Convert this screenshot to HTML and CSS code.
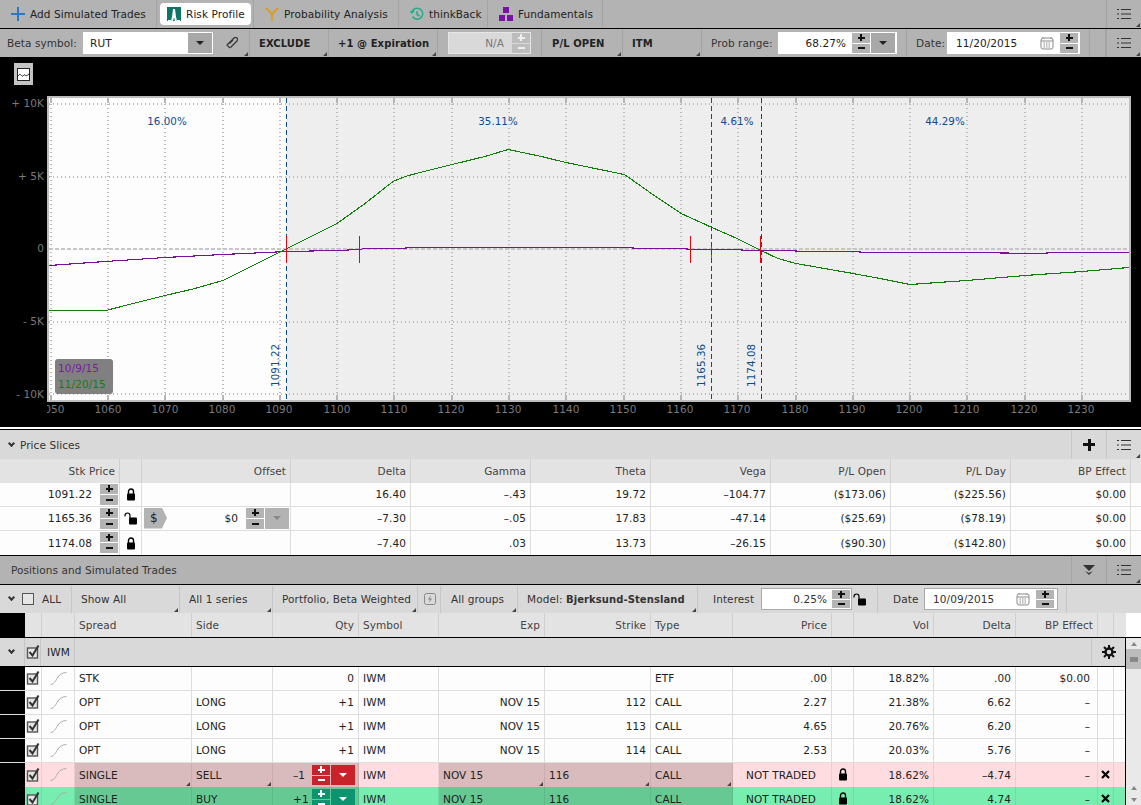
FILE: index.html
```html
<!DOCTYPE html>
<html lang="en">
<head>
  <meta charset="UTF-8">
  <title>Risk Profile</title>
  <link rel="stylesheet" href="styles.css">
</head>
<body>
  <svg class="defs" width="0" height="0">
    <symbol id="menu" viewBox="0 0 14 12"><path d="M0 1.5h2M4 1.5h10M0 6h2M4 6h10M0 10.5h2M4 10.5h10" stroke="#333" stroke-width="1" fill="none"/></symbol>
    <symbol id="lock" viewBox="0 0 10 13"><path d="M2.5 6V3.5a2.5 2.5 0 0 1 5 0V6" stroke="#000" stroke-width="1.4" fill="none"/><rect x="1" y="5.5" width="8" height="7" rx="1" fill="#000"/></symbol>
    <symbol id="unlock" viewBox="0 0 14 13"><path d="M1 4.5V3.5a2.5 2.5 0 0 1 5 0V6" stroke="#000" stroke-width="1.2" fill="none"/><rect x="5" y="5.5" width="8" height="7" rx="1" fill="#000"/></symbol>
    <symbol id="check" viewBox="0 0 14 14"><rect x="1.5" y="3" width="10" height="10" fill="#e6e6e6" stroke="#555" stroke-width="1.4"/><path d="M3.5 7l3 3.5 6-10" stroke="#333" stroke-width="2" fill="none"/></symbol>
    <symbol id="curve" viewBox="0 0 17 13"><path d="M0.5 12.500C5 12 6 8 8 5S12 1 16.500 0.500" stroke="#aaa" stroke-width="1" fill="none"/></symbol>
    <symbol id="cross" viewBox="0 0 9 9"><path d="M1 1l7 7M8 1l-7 7" stroke="#000" stroke-width="2.200" fill="none"/></symbol>
    <symbol id="calendar" viewBox="0 0 14 14"><rect x="1" y="2" width="12" height="11" rx="2" fill="none" stroke="#8a8a8a"/><path d="M1 5h12" stroke="#8a8a8a"/><path d="M3 1v2M11 1v2M3.500 7h7M3.500 9h7M3.500 11h7" stroke="#8a8a8a" stroke-dasharray="1.500 1"/></symbol>
  </svg>

  <div class="tabs">
    <div class="tab tab--first">
      <svg class="tab-ic" viewBox="0 0 14 14"><path d="M7 0v14M0 7h14" stroke="#2b78c5" stroke-width="2"/></svg>
      Add Simulated Trades
    </div>
    <div class="tab tab--risk">
      <span class="tab-active">
        <svg class="tab-ic" viewBox="0 0 14 14"><rect width="14" height="14" fill="#0d7565"/><path d="M5 14l1-4 1-8 1 8 1 4M1 14h3M10 14h3" stroke="#fff" stroke-width="2" fill="none"/></svg>
        Risk Profile
      </span>
    </div>
    <div class="tab tab--prob">
      <svg class="tab-ic" viewBox="0 0 14 14"><path d="M1 1l6 6 6-6M7 7v7" stroke="#dd9d2c" stroke-width="2.200" fill="none"/></svg>
      Probability Analysis
    </div>
    <div class="tab tab--back">
      <svg class="tab-ic" viewBox="0 0 14 14"><path d="M2.500 9.500A5.500 5.500 0 1 0 2 5M0 4l2 2 2-2M7 4v3.500l2.500 1.500" stroke="#1fae8e" stroke-width="1.500" fill="none"/></svg>
      thinkBack
    </div>
    <div class="tab tab--fund">
      <svg class="tab-ic" viewBox="0 0 14 14"><path d="M4 0h6v6H4zM0 8h6v6H0zM8 8h6v6H8z" fill="#7a12a6"/></svg>
      Fundamentals
    </div>
    <div class="bar-fill"></div>
    <div class="menu-btn corner"><svg class="ic-menu"><use href="#menu"/></svg></div>
  </div>

  <div class="toolbar">
    <div class="tool tool--beta">
      <span class="lbl lbl--beta">Beta symbol:</span>
      <div class="field field--beta"><span class="field-text">RUT</span><span class="drop"><i class="tri"></i></span></div>
    </div>
    <div class="tool tool--link corner">
      <svg class="ic-clip" viewBox="0 0 12 12"><path d="M4 11L1 8 8 1a2 2 0 0 1 3 3L4.500 10.500M3.500 6.500L7 3" stroke="#333" stroke-width="1.200" fill="none"/></svg>
    </div>
    <div class="tool tool--excl corner b">EXCLUDE</div>
    <div class="tool tool--exp corner b">+1 @ Expiration</div>
    <div class="tool tool--na">
      <div class="field field--na"><span class="na-text">N/A</span><div class="spin spin--off"><i class="spin-plus"></i><i class="spin-minus"></i></div></div>
    </div>
    <div class="tool tool--pl corner b">P/L OPEN</div>
    <div class="tool tool--itm corner b">ITM</div>
    <div class="tool tool--prob">
      <span class="lbl lbl--prob">Prob range:</span>
      <div class="field field--prob"><span class="prob-text">68.27%</span><div class="spin"><i class="spin-plus"></i><i class="spin-minus"></i></div><span class="drop drop--prob"><i class="tri"></i></span></div>
    </div>
    <div class="tool tool--date">
      <span class="lbl lbl--date">Date:</span>
      <div class="field field--date"><span class="date-text">11/20/2015</span><svg class="ic-cal"><use href="#calendar"/></svg><div class="spin"><i class="spin-plus"></i><i class="spin-minus"></i></div></div>
    </div>
    <div class="bar-fill bar-fill--line"></div>
    <div class="menu-btn corner"><svg class="ic-menu"><use href="#menu"/></svg></div>
  </div>

  <div class="chart">
    <div class="chart-btn"><svg viewBox="0 0 13 13"><rect x="0.500" y="0.500" width="12" height="12" fill="#fff" stroke="#222"/><path d="M1 8c2-3 3-1 4 0s2-2 3-1 2 1 4-1" stroke="#222" fill="none"/></svg></div>
    <svg class="plot" viewBox="0 90 1141 337" width="1141" height="337">
      <rect class="plot-frame" x="47" y="96" width="1084" height="306"/>
      <rect class="plot-bg" x="49" y="98" width="1080" height="302"/>
      <rect class="plot-white" x="49" y="98" width="237" height="302"/>
      <path class="grid-v" d="M51 104V400M108 104V400M165 104V400M223 104V400M280 104V400M337 104V400M394 104V400M452 104V400M509 104V400M566 104V400M624 104V400M681 104V400M738 104V400M796 104V400M853 104V400M910 104V400M967 104V400M1025 104V400M1082 104V400"/>
      <path class="grid-h" d="M49 104H1129M49 177H1129M49 322H1129M49 394H1129"/>
      <path class="grid-zero" d="M49 249H1129"/>
      <path class="ticks" d="M51 98v5M108 98v5M165 98v5M223 98v5M280 98v5M337 98v5M394 98v5M452 98v5M509 98v5M566 98v5M624 98v5M681 98v5M738 98v5M796 98v5M853 98v5M910 98v5M967 98v5M1025 98v5M1082 98v5M51 395v5M108 395v5M165 395v5M223 395v5M280 395v5M337 395v5M394 395v5M452 395v5M509 395v5M566 395v5M624 395v5M681 395v5M738 395v5M796 395v5M853 395v5M910 395v5M967 395v5M1025 395v5M1082 395v5"/>

      <path class="cursor-mid" d="M711.500 242V258"/>
      <path class="line-purple" d="M49 265.500L105 261.500 165 257.500 223 254.500 287 251.500 337 250.500 359 249.500 365 248.500 405 248.500H406V247.500H633V248.500H687V249.500H742V250.500H796V251.500H860V252.500H960L1047 253.500V252.500H1129"/>
      <path class="line-green" d="M49 310.500H106L125 305.500 145 300.500 165 295.500 195 288.500 223 280.500 255 264.500 287 248.500 337 223.500 365 203.500 393 181.500 405 176.500 420 172.500 452 164.500 485 156.500 508 149.500 537 155.500 566 162.500 600 169.500 624 174.500 633 180.500 657 197.500 681 213.500 712 227.500 737 238.500 761 250.500 778 258.500 796 263.500 853 273.500 880 278.500 910 284.500 938 282.500 967 280.500 1025 275.500 1082 271.500 1129 267.500"/>
      <path class="cursor-blue" d="M286.500 98V400M711.500 98V400M761.500 98V400"/>
      <path class="leg-red" d="M286.500 236V263M359.500 236V263M690.500 236V263M760.500 236V263"/>

      <text class="pct" x="167" y="125">16.00%</text>
      <text class="pct" x="498" y="125">35.11%</text>
      <text class="pct" x="737" y="125">4.61%</text>
      <text class="pct" x="945" y="125">44.29%</text>

      <text class="pct-v" transform="translate(279 387) rotate(-90)">1091.22</text>
      <text class="pct-v" transform="translate(705 387) rotate(-90)">1165.36</text>
      <text class="pct-v" transform="translate(755 387) rotate(-90)">1174.08</text>

      <rect class="legend" x="55" y="359" width="58" height="35" rx="3"/>
      <text class="legend-p" x="58" y="372">10/9/15</text>
      <text class="legend-g" x="58" y="388">11/20/15</text>

      <text class="axis-y" x="44" y="107">+ 10K</text>
      <text class="axis-y" x="44" y="180">+ 5K</text>
      <text class="axis-y" x="44" y="252">0</text>
      <text class="axis-y" x="44" y="325">- 5K</text>
      <text class="axis-y" x="44" y="398">- 10K</text>

      <svg x="47" y="402" width="1084" height="16">
        <text class="axis-x" x="4" y="11">1050</text>
        <text class="axis-x" x="61" y="11">1060</text>
        <text class="axis-x" x="118" y="11">1070</text>
        <text class="axis-x" x="175" y="11">1080</text>
        <text class="axis-x" x="232" y="11">1090</text>
        <text class="axis-x" x="290" y="11">1100</text>
        <text class="axis-x" x="347" y="11">1110</text>
        <text class="axis-x" x="404" y="11">1120</text>
        <text class="axis-x" x="461" y="11">1130</text>
        <text class="axis-x" x="519" y="11">1140</text>
        <text class="axis-x" x="576" y="11">1150</text>
        <text class="axis-x" x="633" y="11">1160</text>
        <text class="axis-x" x="690" y="11">1170</text>
        <text class="axis-x" x="748" y="11">1180</text>
        <text class="axis-x" x="805" y="11">1190</text>
        <text class="axis-x" x="862" y="11">1200</text>
        <text class="axis-x" x="919" y="11">1210</text>
        <text class="axis-x" x="977" y="11">1220</text>
        <text class="axis-x" x="1034" y="11">1230</text>
      </svg>
    </svg>
  </div>

  <div class="slices-head">
    <i class="chev"></i><span class="slices-title">Price Slices</span>
    <div class="bar-fill"></div>
    <div class="head-btn head-btn--plus"><i class="big-plus"></i></div>
    <div class="menu-btn menu-btn--light corner"><svg class="ic-menu"><use href="#menu"/></svg></div>
  </div>

  <div class="slices">
    <div class="s-row s-row--head">
      <div class="c r">Stk Price</div><div class="c"></div><div class="c r">Offset</div><div class="c r">Delta</div><div class="c r">Gamma</div><div class="c r">Theta</div><div class="c r">Vega</div><div class="c r">P/L Open</div><div class="c r">P/L Day</div><div class="c r">BP Effect</div><div></div>
    </div>
    <div class="s-row">
      <div class="c stk">1091.22<div class="spin"><i class="spin-plus"></i><i class="spin-minus"></i></div></div>
      <div class="c ctr"><svg class="ic-lock"><use href="#lock"/></svg></div>
      <div class="c"></div><div class="c r">16.40</div><div class="c r">–.43</div><div class="c r">19.72</div><div class="c r">–104.77</div><div class="c r">($173.06)</div><div class="c r">($225.56)</div><div class="c r">$0.00</div><div></div>
    </div>
    <div class="s-row">
      <div class="c stk">1165.36<div class="spin"><i class="spin-plus"></i><i class="spin-minus"></i></div></div>
      <div class="c ctr"><svg class="ic-unlock"><use href="#unlock"/></svg></div>
      <div class="c offset"><span class="dollar">$</span><span class="offset-val">$0</span><div class="spin"><i class="spin-plus"></i><i class="spin-minus"></i></div><span class="drop drop--offset"><i class="tri tri--dim"></i></span></div>
      <div class="c r">–7.30</div><div class="c r">–.05</div><div class="c r">17.83</div><div class="c r">–47.14</div><div class="c r">($25.69)</div><div class="c r">($78.19)</div><div class="c r">$0.00</div><div></div>
    </div>
    <div class="s-row">
      <div class="c stk">1174.08<div class="spin"><i class="spin-plus"></i><i class="spin-minus"></i></div></div>
      <div class="c ctr"><svg class="ic-lock"><use href="#lock"/></svg></div>
      <div class="c"></div><div class="c r">–7.40</div><div class="c r">.03</div><div class="c r">13.73</div><div class="c r">–26.15</div><div class="c r">($90.30)</div><div class="c r">($142.80)</div><div class="c r">$0.00</div><div></div>
    </div>
  </div>

  <div class="pos-head">
    <span class="pos-title">Positions and Simulated Trades</span>
    <div class="bar-fill"></div>
    <div class="head-btn head-btn--dark"><svg class="ic-dbl" viewBox="0 0 12 10"><path d="M0 0h12L6 6z" fill="#333"/><path d="M2 6l4 4 4-4-4 2z" fill="#333"/></svg></div>
    <div class="menu-btn corner"><svg class="ic-menu"><use href="#menu"/></svg></div>
  </div>

  <div class="pos-tools">
    <div class="pt pt--all"><i class="chev"></i><span class="box"></span><span class="pt-all">ALL</span></div>
    <div class="pt pt--show corner">Show All</div>
    <div class="pt pt--series corner">All 1 series</div>
    <div class="pt pt--port corner">Portfolio, Beta Weighted</div>
    <div class="pt pt--bolt"><svg class="ic-bolt" viewBox="0 0 12 12"><rect x="0.500" y="0.500" width="11" height="11" rx="2" fill="none" stroke="#888"/><path d="M7 2L4 6.500h2L5 10l3-4.500H6z" fill="#888"/></svg></div>
    <div class="pt pt--groups corner">All groups</div>
    <div class="pt pt--model corner">Model:&nbsp;<b>Bjerksund-Stensland</b></div>
    <div class="pt pt--rate">
      <span class="lbl--rate">Interest</span>
      <div class="field field--rate"><span class="rate-text">0.25%</span><div class="spin"><i class="spin-plus"></i><i class="spin-minus"></i></div></div>
      <svg class="ic-unlock ic-unlock--rate"><use href="#unlock"/></svg>
    </div>
    <div class="pt pt--date">
      <span class="lbl--pdate">Date</span>
      <div class="field field--pdate"><span class="pdate-text">10/09/2015</span><svg class="ic-cal"><use href="#calendar"/></svg><div class="spin"><i class="spin-plus"></i><i class="spin-minus"></i></div></div>
    </div>
    <div class="bar-fill"></div>
  </div>

  <div class="pos-grid">
    <div class="p-row p-row--head">
      <div class="gap"></div><div class="c"></div><div class="c"></div><div class="c">Spread</div><div class="c">Side</div><div class="c r">Qty</div><div class="c">Symbol</div><div class="c r">Exp</div><div class="c r">Strike</div><div class="c">Type</div><div class="c r">Price</div><div class="c"></div><div class="c r">Vol</div><div class="c r">Delta</div><div class="c r">BP Effect</div><div class="c"></div><div></div>
    </div>
    <div class="pos-main">
      <div class="pos-rows">
        <div class="group">
          <div class="g-chev"><i class="chev"></i></div>
          <div class="g-check"><svg class="ic-check"><use href="#check"/></svg></div>
          <div class="g-sym">IWM</div>
          <div class="bar-fill"></div>
          <div class="g-gear">
            <svg class="ic-gear" viewBox="0 0 14 14"><circle cx="7" cy="7" r="3.500" fill="none" stroke="#111" stroke-width="2.400"/><path d="M7 0v3M7 11v3M0 7h3M11 7h3M2 2l2 2M10 10l2 2M12 2l-2 2M4 10l-2 2" stroke="#111" stroke-width="2"/></svg>
          </div>
        </div>

        <div class="p-row">
          <div class="gap"></div><div class="c ctr"><svg class="ic-check"><use href="#check"/></svg></div><div class="c ctr"><svg class="ic-curve"><use href="#curve"/></svg></div>
          <div class="c">STK</div><div class="c"></div><div class="c r">0</div><div class="c">IWM</div><div class="c r"></div><div class="c r"></div><div class="c">ETF</div><div class="c r">.00</div><div class="c"></div><div class="c r">18.82%</div><div class="c r">.00</div><div class="c r bp">$0.00</div><div class="c"></div><div></div>
        </div>
        <div class="p-row">
          <div class="gap"></div><div class="c ctr"><svg class="ic-check"><use href="#check"/></svg></div><div class="c ctr"><svg class="ic-curve"><use href="#curve"/></svg></div>
          <div class="c">OPT</div><div class="c">LONG</div><div class="c r">+1</div><div class="c">IWM</div><div class="c r">NOV 15</div><div class="c r">112</div><div class="c">CALL</div><div class="c r">2.27</div><div class="c"></div><div class="c r">21.38%</div><div class="c r">6.62</div><div class="c r bp">–</div><div class="c"></div><div></div>
        </div>
        <div class="p-row">
          <div class="gap"></div><div class="c ctr"><svg class="ic-check"><use href="#check"/></svg></div><div class="c ctr"><svg class="ic-curve"><use href="#curve"/></svg></div>
          <div class="c">OPT</div><div class="c">LONG</div><div class="c r">+1</div><div class="c">IWM</div><div class="c r">NOV 15</div><div class="c r">113</div><div class="c">CALL</div><div class="c r">4.65</div><div class="c"></div><div class="c r">20.76%</div><div class="c r">6.20</div><div class="c r bp">–</div><div class="c"></div><div></div>
        </div>
        <div class="p-row">
          <div class="gap"></div><div class="c ctr"><svg class="ic-check"><use href="#check"/></svg></div><div class="c ctr"><svg class="ic-curve"><use href="#curve"/></svg></div>
          <div class="c">OPT</div><div class="c">LONG</div><div class="c r">+1</div><div class="c">IWM</div><div class="c r">NOV 15</div><div class="c r">114</div><div class="c">CALL</div><div class="c r">2.53</div><div class="c"></div><div class="c r">20.03%</div><div class="c r">5.76</div><div class="c r bp">–</div><div class="c"></div><div></div>
        </div>

        <div class="p-row p-row--sell">
          <div class="gap"></div><div class="c ctr"><svg class="ic-check"><use href="#check"/></svg></div><div class="c ctr"><svg class="ic-curve"><use href="#curve"/></svg></div>
          <div class="c hi corner">SINGLE</div><div class="c hi corner">SELL</div>
          <div class="c hi qty">–1<div class="spin spin--sell"><i class="spin-plus"></i><i class="spin-minus"></i></div><span class="drop drop--sell"><i class="tri tri--white"></i></span></div>
          <div class="c">IWM</div><div class="c hi corner">NOV 15</div><div class="c hi corner">116</div><div class="c hi corner">CALL</div><div class="c nt">NOT TRADED</div><div class="c ctr"><svg class="ic-lock"><use href="#lock"/></svg></div><div class="c r">18.62%</div><div class="c r">–4.74</div><div class="c r bp">–</div><div class="c ctr"><svg class="ic-cross"><use href="#cross"/></svg></div><div></div>
        </div>
        <div class="p-row p-row--buy">
          <div class="gap"></div><div class="c ctr"><svg class="ic-check"><use href="#check"/></svg></div><div class="c ctr"><svg class="ic-curve"><use href="#curve"/></svg></div>
          <div class="c hi corner">SINGLE</div><div class="c hi corner">BUY</div>
          <div class="c hi qty">+1<div class="spin spin--buy"><i class="spin-plus"></i><i class="spin-minus"></i></div><span class="drop drop--buy"><i class="tri tri--white"></i></span></div>
          <div class="c">IWM</div><div class="c hi corner">NOV 15</div><div class="c hi corner">116</div><div class="c hi corner">CALL</div><div class="c nt">NOT TRADED</div><div class="c ctr"><svg class="ic-lock"><use href="#lock"/></svg></div><div class="c r">18.62%</div><div class="c r">4.74</div><div class="c r bp">–</div><div class="c ctr"><svg class="ic-cross"><use href="#cross"/></svg></div><div></div>
        </div>
      </div>

      <div class="scroll">
        <i class="tri tri--up"></i>
        <div class="thumb"></div>
        <div class="bar-fill"></div>
        <i class="tri tri--up"></i>
        <i class="tri tri--small"></i>
      </div>
    </div>
  </div>
</body>
</html>
```

FILE: styles.css
```css
* {
  box-sizing: border-box;
}

html,
body {
  height: 805px;
  overflow: hidden;
}

body {
  margin: 0;
  background-color: #000;
  color: #222;
  font-family: "DejaVu Sans", sans-serif;
  font-size: 10.5px;
  letter-spacing: 0.08px;
}

i {
  display: block;
}

.defs {
  display: block;
  height: 0;
}

.b,
b {
  font-size: 10px;
  font-weight: bold;
}

.bar-fill {
  flex: 1;
}

/* small triangle in the corner of drop downs */
.corner {
  position: relative;
}

.corner::after {
  content: "";
  position: absolute;
  right: 1px;
  bottom: 1px;
  border-style: solid;
  border-width: 0 0 4px 4px;
  border-color: transparent transparent #444 transparent;
}

/* top tabs */
.tabs {
  display: flex;
  height: 29px;
  background-color: #b3b3b3;
  border-bottom: 1px solid #000;
}

.tab {
  display: flex;
  align-items: center;
  gap: 5px;
  border-right: 1px solid #a3a3a3;
  color: #222;
}

.tab-ic {
  width: 14px;
  height: 14px;
  flex: none;
}

.tab--first { width: 157px; padding-left: 11px; }
.tab--risk { width: 97px; padding-left: 3px; }
.tab--prob { width: 145px; padding-left: 11px; }
.tab--back { width: 89px; padding-left: 11px; }
.tab--fund { width: 115px; padding-left: 11px; }

.tab-active {
  display: flex;
  align-items: center;
  gap: 5px;
  width: 91px;
  height: 22px;
  padding-left: 7px;
  background-color: #fff;
  border-radius: 4px;
}

.menu-btn {
  display: flex;
  align-items: center;
  justify-content: center;
  width: 35px;
  height: 100%;
  border-left: 1px solid #a3a3a3;
}

.ic-menu {
  width: 14px;
  height: 12px;
}

/* toolbar under the tabs */
.toolbar {
  display: flex;
  height: 28px;
  background-color: #b3b3b3;
}

.tool {
  display: flex;
  align-items: center;
  flex: none;
  height: 100%;
  border-right: 1px solid #a3a3a3;
  white-space: nowrap;
}

.lbl {
  color: #333;
}

.lbl--beta { width: 67px; }
.lbl--prob { width: 62px; }
.lbl--date { width: 26px; }

.tool--beta { width: 220px; padding-left: 7px; gap: 9px; border-right: 0; }
.tool--link { width: 30px; padding-right: 6px; justify-content: center; }
.tool--excl { width: 79px; padding-left: 9px; }
.tool--exp { width: 109px; padding-left: 9px; }
.tool--na { width: 104px; padding-left: 10px; }
.tool--pl { width: 81px; padding-left: 10px; }
.tool--itm { width: 79px; padding-left: 9px; }
.tool--prob { width: 205px; padding-left: 9px; gap: 5px; }
.tool--date { width: 183px; padding-left: 9px; gap: 5px; }

.bar-fill--line {
  border-right: 1px solid #a3a3a3;
}

.ic-clip {
  width: 12px;
  height: 12px;
}

.field {
  display: flex;
  align-items: stretch;
  flex: none;
  height: 22px;
  background-color: #fff;
  border: 1px solid #fff;
}

.field--beta { width: 130px; justify-content: space-between; }
.field--na { width: 83px; background-color: #d9d9d9; border-color: #e6e6e6; justify-content: flex-end; gap: 8px; }
.field--prob { width: 119px; }
.field--date { width: 133px; }
.field--rate { width: 91px; border-color: #aaa; }
.field--pdate { width: 134px; border-color: #aaa; }

.field-text { align-self: center; padding-left: 6px; }
.na-text { align-self: center; color: #777; }
.prob-text { width: 73px; align-self: center; text-align: right; padding-right: 6px; }
.date-text { width: 92px; align-self: center; padding-left: 8px; }
.rate-text { width: 70px; align-self: center; text-align: right; padding-right: 5px; }
.pdate-text { width: 91px; align-self: center; padding-left: 8px; }

.ic-cal {
  width: 14px;
  height: 14px;
  align-self: center;
  margin-right: 6px;
}

.spin {
  display: flex;
  flex-direction: column;
  gap: 1px;
  width: 18px;
  flex: none;
}

.spin i {
  flex: 1;
}

.spin-plus {
  background:
    linear-gradient(var(--sign, #111), var(--sign, #111)) center / 7px 2px no-repeat,
    linear-gradient(var(--sign, #111), var(--sign, #111)) center / 2px 7px no-repeat,
    var(--btn, #b3b3b3);
}

.spin-minus {
  background:
    linear-gradient(var(--sign, #111), var(--sign, #111)) center / 7px 2px no-repeat,
    var(--btn, #b3b3b3);
}

.spin--off { --sign: #efefef; --btn: #bdbdbd; }
.spin--sell { --sign: #fff; --btn: #c8232a; }
.spin--buy { --sign: #fff; --btn: #0b9470; }

.drop {
  display: flex;
  align-items: center;
  justify-content: center;
  background-color: #a8a8a8;
}

.field--beta .drop { width: 24px; }
.drop--prob { width: 24px; margin-left: 1px; }

.tri {
  width: 0;
  height: 0;
  border-style: solid;
  border-width: 4px 4px 0 4px;
  border-color: #222 transparent transparent transparent;
}

.tri--dim { border-top-color: #888; }
.tri--white { border-top-color: #fff; }

/* chart */
.chart {
  height: 372px;
  padding-top: 6px;
  background-color: #000;
  border-bottom: 2px solid #fff;
}

.chart-btn {
  display: flex;
  align-items: center;
  justify-content: center;
  width: 19px;
  height: 22px;
  margin: 0 0 5px 14px;
  background-color: #c4c4c4;
}

.chart-btn svg {
  width: 13px;
  height: 13px;
}

.plot {
  display: block;
}

.plot-frame { fill: #bdbdbd; }
.plot-bg { fill: #eee; }
.plot-white { fill: #fdfdfd; }

.grid-v,
.grid-h,
.grid-zero,
.ticks,
.cursor-blue,
.cursor-mid,
.leg-red,
.line-green,
.line-purple {
  fill: none;
  shape-rendering: crispEdges;
}

.grid-v { stroke: #bbb; stroke-width: 2; stroke-dasharray: 1 3; }
.grid-h { stroke: #bbb; stroke-width: 2; stroke-dasharray: 1 3; }
.grid-zero { stroke: #c6c6c6; stroke-width: 2; stroke-dasharray: 4 2; }
.ticks { stroke: #b5b5b5; stroke-width: 2; }
.cursor-blue { stroke: #0c4c8c; stroke-width: 1; stroke-dasharray: 5 3; }
.cursor-mid { stroke: #8a6a3a; stroke-width: 1; }
.leg-red { stroke: #f0000c; stroke-width: 1; }
.line-green { stroke: #0f7f0a; stroke-width: 1.1; }
.line-purple { stroke: #7a0ea0; stroke-width: 1.1; }

.pct,
.pct-v {
  fill: #0c4c8c;
  font-size: 10.3px;
}

.pct {
  text-anchor: middle;
}

.legend { fill: #808080; }
.legend-p { fill: #7a1aa0; font-size: 10.5px; }
.legend-g { fill: #137f10; font-size: 10.5px; }

.axis-y {
  fill: #7a7a7a;
  font-size: 10.5px;
  text-anchor: end;
}

.axis-x {
  fill: #7a7a7a;
  font-size: 10.5px;
  text-anchor: middle;
}

/* price slices */
.slices-head {
  display: flex;
  align-items: center;
  height: 29px;
  margin-top: 1px;
  background-color: #d9d9d9;
}

.chev {
  width: 5px;
  height: 5px;
  flex: none;
  margin: -3px 4px 0 2px;
  border-right: 2px solid #333;
  border-bottom: 2px solid #333;
  transform: rotate(45deg);
}

.slices-head .chev {
  margin: -3px 6px 0 9px;
}

.slices-title {
  color: #333;
}

.head-btn {
  display: flex;
  align-items: center;
  justify-content: center;
  width: 35px;
  height: 100%;
  border-left: 1px solid #c6c6c6;
}

.menu-btn--light {
  border-left-color: #c6c6c6;
}

.big-plus {
  width: 12px;
  height: 12px;
  background:
    linear-gradient(#111, #111) center / 12px 3px no-repeat,
    linear-gradient(#111, #111) center / 3px 12px no-repeat;
}

.s-row {
  display: grid;
  grid-template-columns: 120px 22px 149px repeat(7, 120px) 1fr;
  height: 24px;
  background-color: #fdfdfd;
  border-bottom: 1px solid #ddd;
}

.s-row:last-child {
  border-bottom: 0;
}

.s-row .r {
  padding-bottom: 1px;
}

.s-row--head {
  background-color: #e3e3e3;
  border-bottom: 0;
  color: #444;
}

.c {
  display: flex;
  align-items: center;
  min-width: 0;
  padding: 0 4px;
  border-right: 1px solid #ddd;
  white-space: nowrap;
}

.s-row--head .c {
  border-right-color: #cfcfcf;
}

.r {
  justify-content: flex-end;
}

.ctr {
  justify-content: center;
  padding: 0;
}

.stk {
  justify-content: flex-end;
  gap: 8px;
  padding: 0 1px 1px 0;
}

.stk .spin {
  height: 21px;
}

.ic-lock {
  width: 10px;
  height: 13px;
}

.ic-unlock {
  width: 14px;
  height: 13px;
}

.offset {
  padding: 0 1px 1px 2px;
}

.dollar {
  display: flex;
  align-items: center;
  width: 23px;
  height: 21px;
  padding-left: 6px;
  font-size: 12px;
  background-color: #b3b3b3;
  clip-path: polygon(0 0, 78% 0, 100% 50%, 78% 100%, 0 100%);
}

.offset-val {
  width: 79px;
  text-align: right;
  padding-right: 8px;
}

.offset .spin {
  height: 21px;
}

.drop--offset {
  width: 24px;
  height: 21px;
  margin-left: 1px;
  background-color: #b3b3b3;
}

/* positions */
.pos-head {
  display: flex;
  align-items: center;
  height: 28px;
  margin-top: 1px;
  padding-left: 11px;
  background-color: #b3b3b3;
}

.pos-head .menu-btn {
  height: 100%;
}

.pos-head .head-btn {
  border-left-color: #a3a3a3;
}

.pos-title {
  color: #333;
}

.ic-dbl {
  width: 12px;
  height: 10px;
}

.pos-tools {
  display: flex;
  height: 28px;
  margin-top: 1px;
  background-color: #d9d9d9;
}

.pt {
  display: flex;
  align-items: center;
  flex: none;
  padding-left: 9px;
  border-right: 1px solid #c6c6c6;
  color: #333;
  white-space: nowrap;
}

.pt--all { width: 72px; padding-left: 7px; }
.pt--show { width: 108px; }
.pt--series { width: 93px; }
.pt--port { width: 145px; }
.pt--bolt { width: 23px; padding-left: 6px; }
.pt--groups { width: 77px; padding-left: 10px; }
.pt--model { width: 180px; }
.pt--rate { width: 180px; padding-left: 15px; gap: 7px; }
.pt--date { width: 189px; padding-left: 15px; gap: 7px; }

.lbl--rate { width: 41px; }
.lbl--pdate { width: 24px; }

.pt--all .chev {
  margin-right: 8px;
}

.box {
  width: 12px;
  height: 12px;
  border: 1px solid #555;
  background-color: #e6e6e6;
}

.pt-all {
  margin-left: 8px;
}

.ic-bolt {
  width: 12px;
  height: 12px;
}

.ic-unlock--rate {
  margin-left: -6px;
}

.pt--rate .spin,
.pt--date .spin {
  margin: 1px 0;
}

/* positions grid, columns line up on every row */
.p-row {
  display: grid;
  grid-template-columns: 25px 17px 33px 117px 81px 86px 80px 106px 106px 82px 99px 22px 80px 82px 82px 16px 10px;
  height: 24px;
  background-color: #fdfdfd;
  border-bottom: 1px solid #ddd;
}

.p-row .c {
  padding-bottom: 1px;
}

.gap {
  background-color: #000;
}

.p-row--head {
  width: 1126px;
  height: 24px;
  background-color: #e3e3e3;
  border-bottom: 0;
  color: #444;
}

.p-row--head .c {
  border-right-color: #cfcfcf;
}

.pos-grid {
  background-color: #fff;
}

.pos-main {
  display: flex;
  border-top: 1px solid #000;
}

.pos-rows {
  width: 1126px;
  flex: none;
  border-right: 1px solid #000;
  background-color: #fdfdfd;
}

.group {
  display: flex;
  align-items: center;
  height: 29px;
  background-color: #d9d9d9;
  border-bottom: 1px solid #000;
}

.g-chev,
.g-check,
.g-sym {
  display: flex;
  align-items: center;
  height: 100%;
  border-right: 1px solid #c6c6c6;
}

.g-chev { width: 25px; padding-left: 7px; }
.g-check { width: 16px; justify-content: center; }
.g-sym { width: 34px; padding-left: 6px; }

.g-gear {
  display: flex;
  align-items: center;
  justify-content: center;
  width: 34px;
  height: 100%;
  border-left: 1px solid #c6c6c6;
}

.ic-gear {
  width: 14px;
  height: 14px;
}

.ic-check {
  width: 14px;
  height: 14px;
}

.ic-curve {
  width: 17px;
  height: 13px;
}

.ic-cross {
  width: 9px;
  height: 9px;
}

.bp {
  padding-right: 7px;
}

.p-row--sell {
  background-color: #ffdcdf;
  border-bottom: 0;
}

.p-row--sell .hi {
  background-color: #d9bbbd;
}

.p-row--buy {
  border-bottom: 0;
  background-color: #78edb0;
}

.p-row--buy .hi {
  background-color: #66c994;
}

.p-row--sell .c,
.p-row--buy .c {
  border-right-color: rgba(0, 0, 0, 0.07);
}

.p-row .qty {
  padding: 2px 3px 2px 20px;
}

.qty .spin {
  height: 20px;
  margin-left: auto;
}

.drop--sell,
.drop--buy {
  width: 24px;
  margin-left: 1px;
  align-self: stretch;
}

.drop--sell { background-color: #c8232a; }
.drop--buy { background-color: #0b9470; }

.p-row .nt {
  padding-left: 13px;
}

.scroll {
  display: flex;
  flex-direction: column;
  align-items: center;
  width: 15px;
  height: 168px;
  padding-top: 4px;
  background-color: #e9e9e9;
}

.thumb {
  width: 100%;
  height: 20px;
  margin-top: 3px;
  background:
    linear-gradient(#888, #888) center / 8px 5px no-repeat,
    #bbb;
}

.tri--up {
  border-width: 0 3px 4px 3px;
  border-color: transparent transparent #888 transparent;
}

.tri--small {
  margin: 8px 0 4px;
  border-width: 4px 3px 0 3px;
  border-top-color: #888;
}
```
